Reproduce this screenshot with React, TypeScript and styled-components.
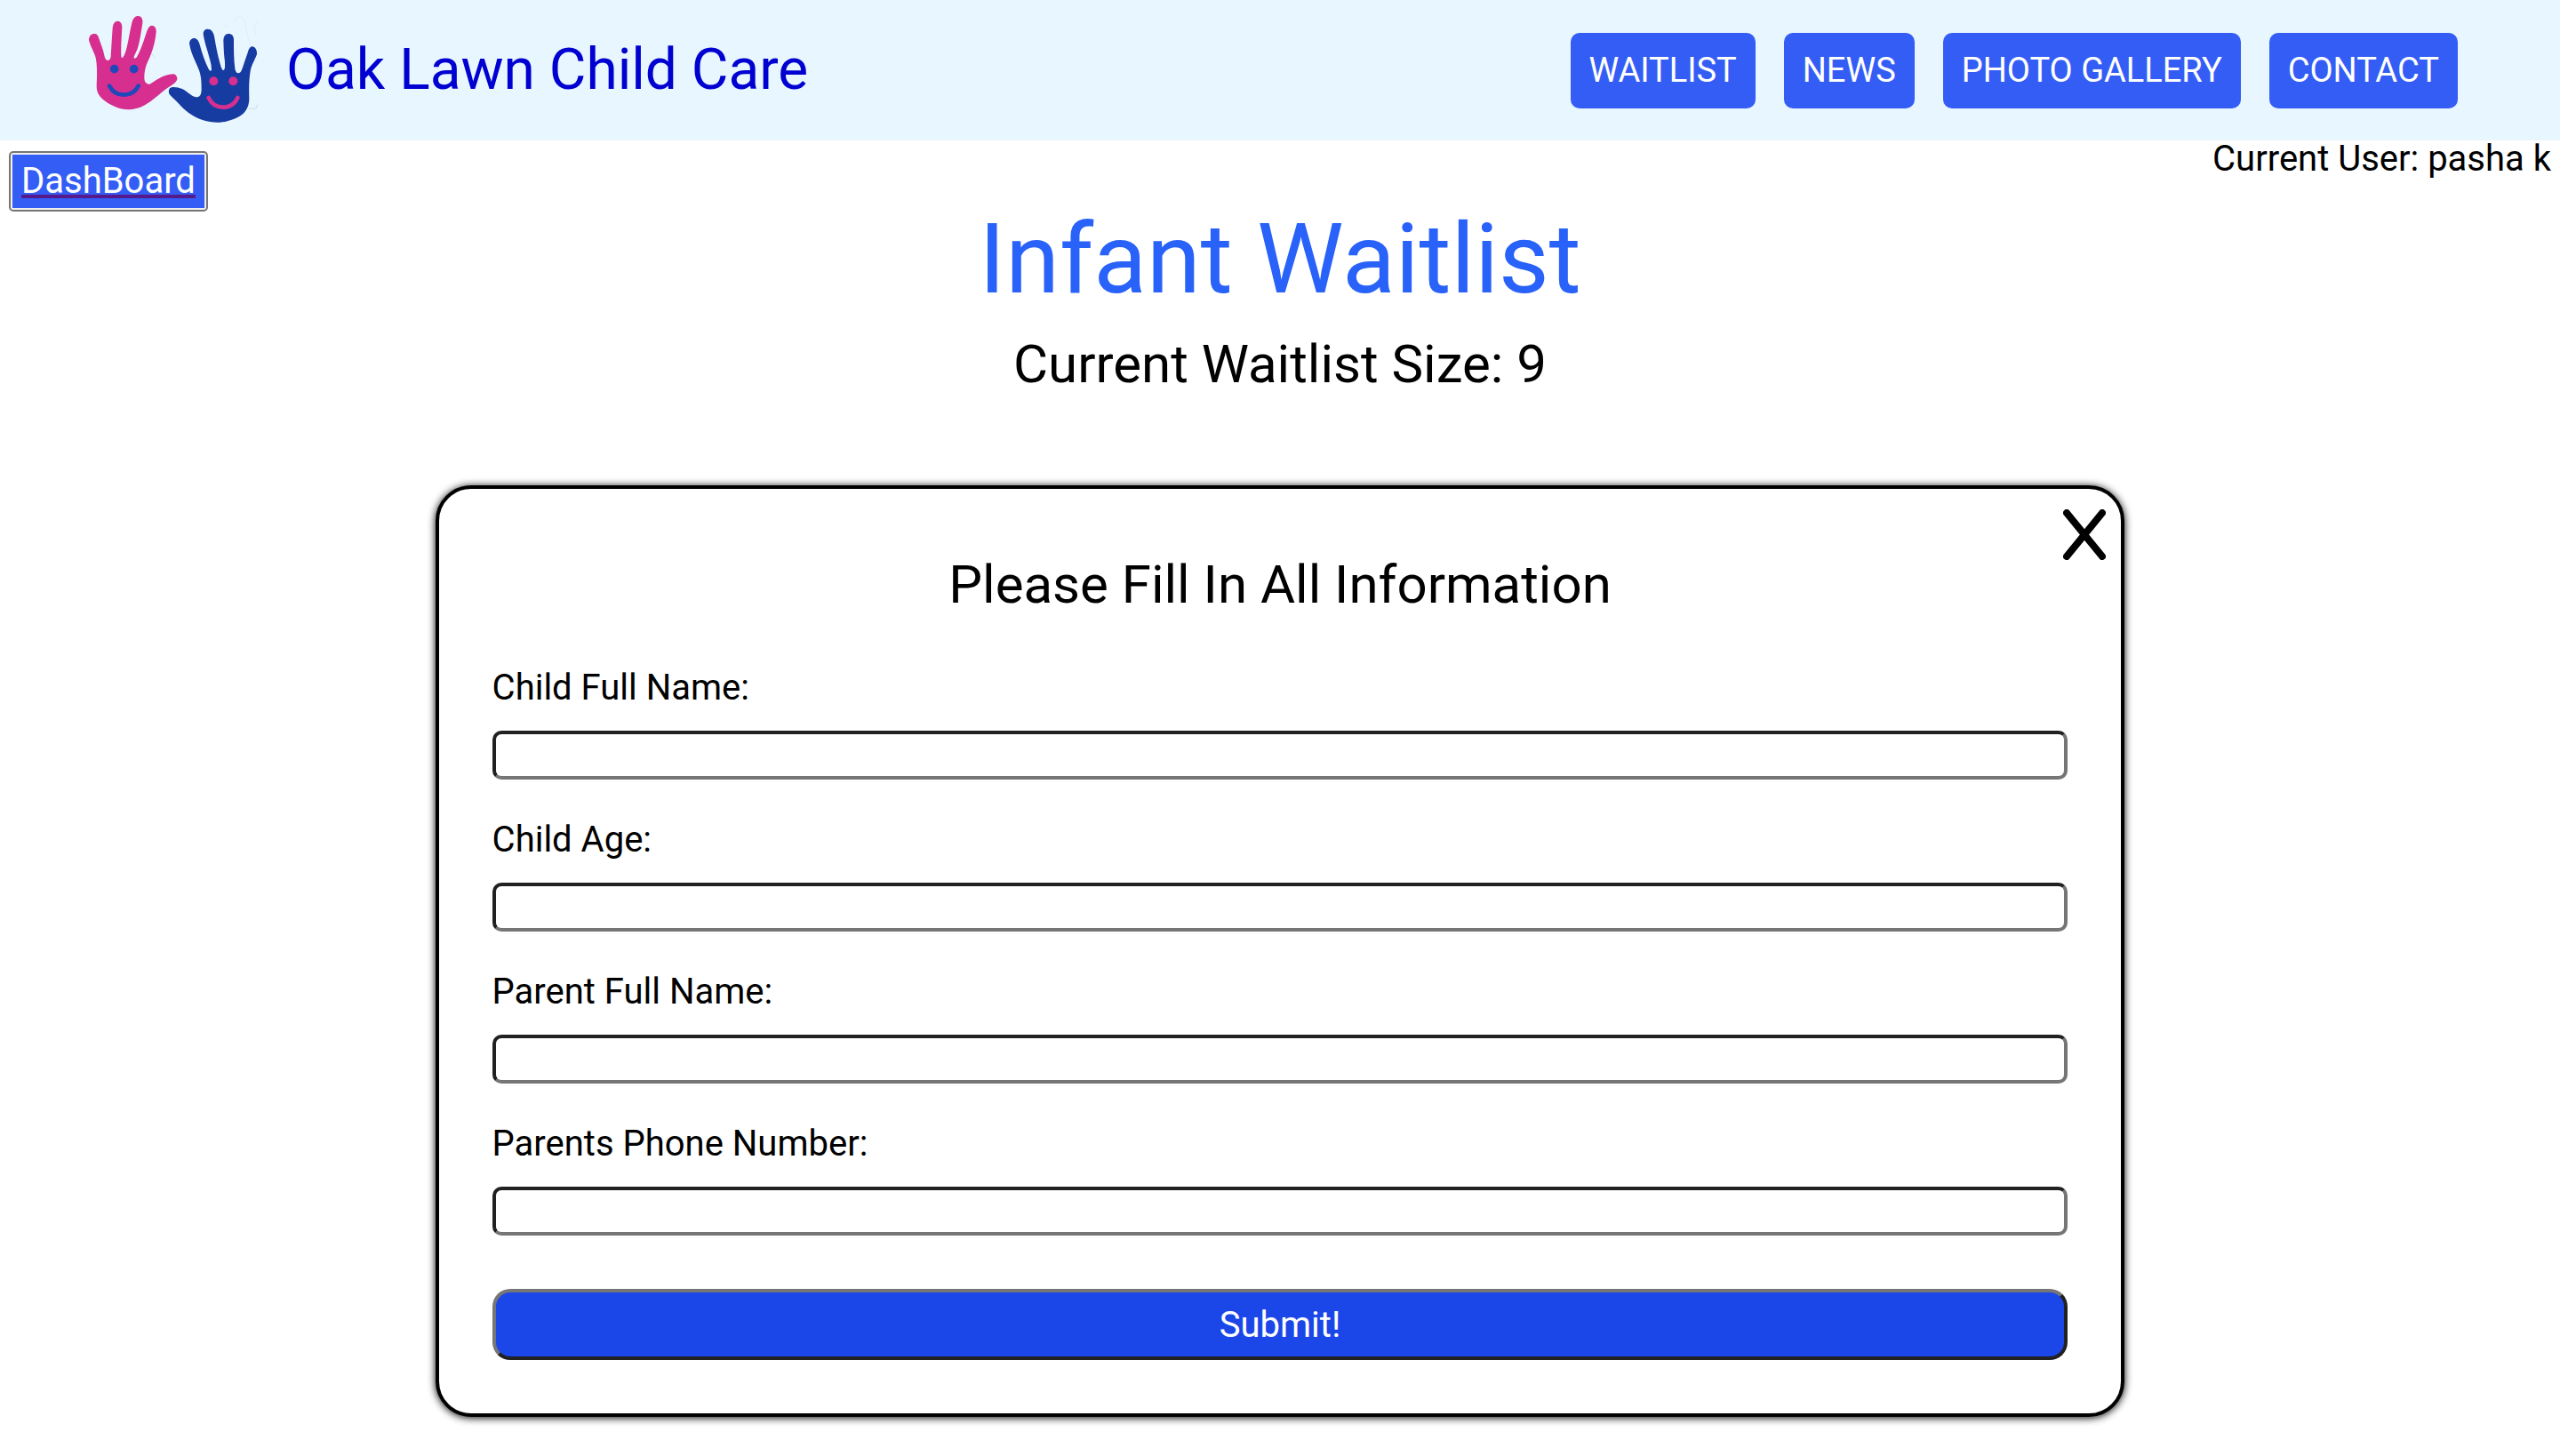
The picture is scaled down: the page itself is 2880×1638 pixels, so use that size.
import React from "react";
import styled, { createGlobalStyle } from "styled-components";

const GlobalStyle = createGlobalStyle`
  *, *::before, *::after { box-sizing: border-box; }
  body {
    margin: 0;
    background: #ffffff;
    color: #000000;
    font-family: Roboto, "Liberation Sans", sans-serif;
    font-size: 40px;
    line-height: 47px;
  }
`;

const Header = styled.header`
  display: flex;
  align-items: center;
  justify-content: space-between;
  padding: 0 4% 0 80px;
  background: #e8f6ff;
`;

const Brand = styled.a`
  display: flex;
  align-items: center;
  gap: 2px;
  color: #0000d1;
  font-size: 64px;
  line-height: 76px;
  text-decoration: none;
`;

const Logo = styled.svg`
  display: block;
  width: 240px;
  height: 158px;
`;

const Nav = styled.nav`
  display: flex;
  gap: 32px;
`;

const NavLink = styled.a`
  padding: 19px 21px;
  border-radius: 10px;
  background: #345df6;
  color: #ffffff;
  font-size: 38px;
  text-decoration: none;
`;

const UserBar = styled.div`
  display: flex;
  justify-content: space-between;
  align-items: flex-start;
  padding: 0 10px;
`;

const DashboardButton = styled.button`
  margin: 12px 0 0;
  padding: 2px;
  border: 2px solid #767676;
  border-radius: 5px;
  background: #efefef;
  color: #551a8b;
  font: inherit;
  line-height: 60px;
`;

const DashboardLabel = styled.span`
  display: block;
  padding: 0 10px;
  background: #345df6;
  color: #ffffff;
  text-decoration: underline 4px #551a8b;
  text-decoration-skip-ink: none;
`;

const CurrentUser = styled.span`
  line-height: 42px;
`;

const Main = styled.main`
  display: flex;
  flex-direction: column;
  align-items: center;
  padding-bottom: 40px;
`;

const Title = styled.h1`
  margin: 0;
  color: #2962f8;
  font-size: 110px;
  font-weight: 400;
  line-height: 108px;
`;

const Subtitle = styled.h2`
  margin: 0;
  font-size: 60px;
  font-weight: 400;
  line-height: 60px;
`;

const WaitlistSize = styled(Subtitle)`
  margin: 34px 0 106px;
`;

const Card = styled.form`
  position: relative;
  display: flex;
  flex-direction: column;
  width: 66%;
  padding: 78px 60px 60px;
  border: 4px solid #000000;
  border-radius: 40px;
  background: #ffffff;
  box-shadow: 0 1px 10px #000000;
`;

const FormTitle = styled(Subtitle)`
  margin-bottom: 62px;
  text-align: center;
`;

const CloseButton = styled.button`
  position: absolute;
  top: 23px;
  right: 17px;
  padding: 0;
  border: 0;
  background: none;
  line-height: 0;
`;

const Fields = styled.div`
  display: flex;
  flex-direction: column;
  gap: 44px;
`;

const Field = styled.div`
  display: flex;
  flex-direction: column;
  gap: 25px;
`;

const TextInput = styled.input`
  width: 100%;
  height: 55px;
  padding: 2px 8px;
  border: 4px solid;
  border-color: #212121 #767676 #767676 #212121;
  border-radius: 10px;
  background: #ffffff;
  font: inherit;
  font-size: 27px;
`;

const SubmitButton = styled.button`
  height: 80px;
  margin-top: 60px;
  padding: 0;
  border: 4px solid;
  border-color: #767676 #212121 #212121 #767676;
  border-radius: 20px;
  background: #1b46e8;
  color: #ffffff;
  font: inherit;
`;

const navItems = ["WAITLIST", "NEWS", "PHOTO GALLERY", "CONTACT"];

const fields = [
  { id: "child-name", label: "Child Full Name:" },
  { id: "child-age", label: "Child Age:" },
  { id: "parent-name", label: "Parent Full Name:" },
  { id: "parent-phone", label: "Parents Phone Number:" },
];

function HandsLogo() {
  return (
    <Logo viewBox="0 0 720 474" aria-hidden="true">
      <path
        fill="#d62f90"
        d="M60 135C60 122 68 114 78 114C88 114 91 120 94 130C100 150 108 165 112 187C114 198 118 204 124 204C131 204 133 198 134 190C136 160 138 120 140 95C141 79 148 71 157 71C167 71 172 80 172 92C170 130 168 160 169 185C169 192 170 195 173 195C180 190 184 175 188 160C195 130 199 100 205 77C209 62 216 54 226 54C237 54 243 64 241 78C236 110 232 140 224 165C218 180 212 188 212 195C213 199 218 197 222 192C235 170 246 135 256 105C260 93 265 86 272 86C282 86 288 95 287 107C284 145 272 180 260 205C250 225 247 245 247 262C247 277 254 285 265 284C285 275 300 255 343 250C353 250 359 258 358 268C354 280 340 288 325 297C300 315 275 340 250 354C230 365 210 370 194 370C165 370 130 355 108 336C92 322 86 308 86 290C88 250 88 220 83 195C78 175 66 160 60 135Z"
      />
      <g fill="#1f49b9">
        <circle cx="146" cy="233" r="14.500" />
        <circle cx="212" cy="233" r="14.500" />
      </g>
      <path d="M129 290Q144 320 178 320Q212 320 227 290" fill="none" stroke="#1f49b9" strokeWidth="14" strokeLinecap="round" />
      <path
        fill="#173ca1"
        d="M399 145C401 133 408 129 416 129C426 130 431 140 434 150C442 180 452 210 465 235C468 240 474 241 474 235C474 215 466 195 461 175C453 150 448 130 446 115C446 104 452 98 461 98C473 98 480 108 483 122C488 150 494 185 503 215C507 230 510 237 515 237C520 235 520 215 518 200C515 175 515 160 514 135C515 122 521 114 531 114C543 114 549 122 549 135C549 165 549 200 553 232C555 243 559 247 565 247C573 246 576 236 579 228C586 205 594 185 599 168C603 160 607 156 613 157C623 160 628 170 627 183C620 203 608 220 605 240C600 270 600 300 601 335C600 365 585 385 562 396C540 407 515 413 494 413C460 413 430 402 405 386C380 372 365 350 335 322C328 315 328 305 333 298C342 291 360 295 375 300C395 310 405 325 422 328C434 328 440 320 440 300C440 270 438 255 432 238C420 205 403 180 399 145Z"
      />
      <g fill="#d62f90">
        <circle cx="481" cy="274" r="15" />
        <circle cx="547" cy="274" r="15" />
      </g>
      <path d="M464 330Q479 362 513 362Q547 362 562 330" fill="none" stroke="#d62f90" strokeWidth="14" strokeLinecap="round" />
      <g fill="none" stroke="#dbe9f2" strokeWidth="2">
        <path d="M552 72Q556 54 572 55Q586 60 589 88Q594 120 606 156" />
        <path d="M514 86Q528 86 534 97M630 72Q612 90 623 117" />
        <path d="M270 180L284 197M600 367L624 367L629 352" stroke="#c4d1da" />
      </g>
    </Logo>
  );
}

export default function App() {
  return (
    <>
      <GlobalStyle />
      <Header>
        <Brand href="#home">
          <HandsLogo />
          Oak Lawn Child Care
        </Brand>
        <Nav>
          {navItems.map((item) => (
            <NavLink key={item} href={`#${item.toLowerCase().replace(" ", "-")}`}>
              {item}
            </NavLink>
          ))}
        </Nav>
      </Header>
      <UserBar>
        <DashboardButton type="button">
          <DashboardLabel>DashBoard</DashboardLabel>
        </DashboardButton>
        <CurrentUser>Current User: pasha k</CurrentUser>
      </UserBar>
      <Main>
        <Title>Infant Waitlist</Title>
        <WaitlistSize>Current Waitlist Size: 9</WaitlistSize>
        <Card onSubmit={(event: React.FormEvent) => event.preventDefault()}>
          <CloseButton type="button" aria-label="Close">
            <svg width="48" height="57" viewBox="0 0 48 57" fill="none" stroke="#000000" strokeWidth="8" strokeLinecap="round">
              <path d="M4 4L44 53M44 4L4 53" />
            </svg>
          </CloseButton>
          <FormTitle>Please Fill In All Information</FormTitle>
          <Fields>
            {fields.map(({ id, label }) => (
              <Field key={id}>
                <label htmlFor={id}>{label}</label>
                <TextInput id={id} type="text" />
              </Field>
            ))}
          </Fields>
          <SubmitButton type="submit">Submit!</SubmitButton>
        </Card>
      </Main>
    </>
  );
}
